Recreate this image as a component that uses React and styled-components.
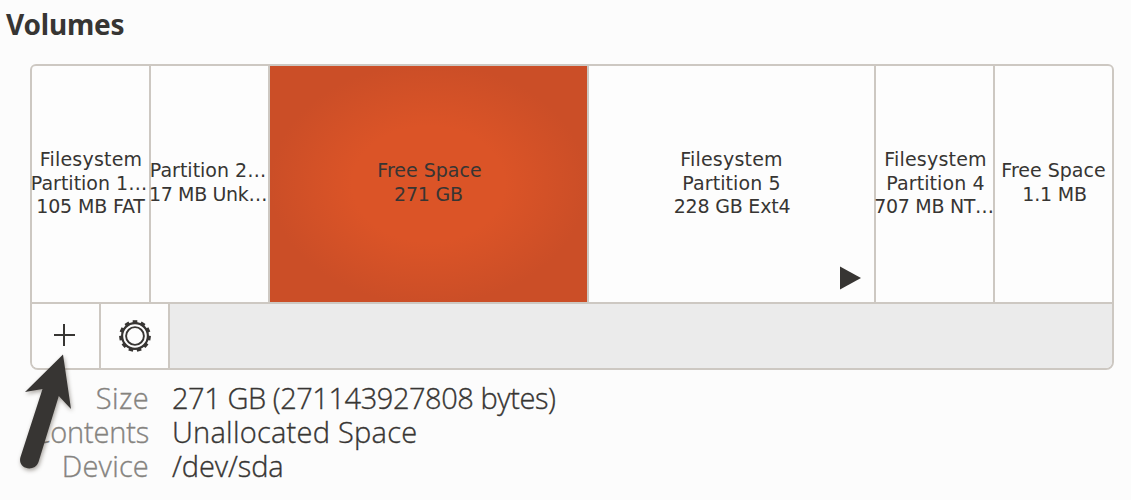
import React from 'react';
import styled, { createGlobalStyle } from 'styled-components';

const line = '#cdc8c2';
const ink = '#373533';

const GlobalStyle = createGlobalStyle`
  body { margin: 0; background: #fcfcfc; color: ${ink}; overflow: hidden; }
`;

const Page = styled.main`
  position: relative;
  box-sizing: border-box;
  width: 1131px;
  height: 500px;
  padding: 6px 17px 0 30px;
  font-family: 'Open Sans', 'Noto Sans', sans-serif;
`;

const Title = styled.h1`
  margin: 0 0 22px -24px;
  height: 36px;
  font: 700 28px/36px 'Noto Sans', 'Open Sans', sans-serif;
  letter-spacing: -0.2px;
`;

const Frame = styled.section`
  box-sizing: border-box;
  height: 306px;
  border: 2px solid ${line};
  border-radius: 6px 6px 8px 8px;
  display: flex;
  flex-direction: column;
  background: #fdfdfd;
`;

const VolumeMap = styled.div`
  display: grid;
  grid-template-columns: 117px 117px 317px 285px 117px 117px;
  gap: 2px;
  height: 236px;
  background: ${line};
  border-bottom: 2px solid ${line};
  border-radius: 4px 4px 0 0;
`;

const Volume = styled.div`
  position: relative;
  box-sizing: border-box;
  padding-bottom: ${p => (p.$rows === 3 ? 1.5 : 3)}px;
  display: flex;
  flex-direction: column;
  align-items: center;
  justify-content: center;
  border-radius: ${p => p.$radius || 0};
  background: ${p => p.$selected
    ? 'radial-gradient(ellipse 50% 51% at 50% 50%, #db5427 0%, #db5427 48%, #cb4e27 100%)'
    : '#fdfdfd'};
`;

const Label = styled.span`
  font: 19px/23.5px 'DejaVu Sans', sans-serif;
  white-space: nowrap;
  letter-spacing: ${p => p.$spacing || 0}px;
  margin-left: ${p => p.$shift || 0}px;
`;

const Playing = styled.svg`
  position: absolute;
  right: 11px;
  bottom: 11px;
`;

const Toolbar = styled.div`
  flex: 1;
  display: flex;
  background: #ebebeb;
  border-radius: 0 0 6px 6px;
`;

const ToolButton = styled.button`
  box-sizing: border-box;
  width: 69px;
  padding: ${p => (p.$first ? '0 2px 0 0' : '0')};
  border: 0;
  border-right: 2px solid ${line};
  border-radius: ${p => (p.$first ? '0 0 0 6px' : 0)};
  background: #fdfdfd;
  display: flex;
  align-items: center;
  justify-content: center;
`;

const Details = styled.dl`
  margin: 11px 0 0;
  display: grid;
  grid-template-columns: 119px 1fr;
  column-gap: 23px;
  grid-auto-rows: 34px;
  font-size: 29px;
  line-height: 34px;
  font-weight: 300;
  -webkit-text-stroke-width: 0.35px;
`;

const Term = styled.dt`
  color: #85837f;
  display: flex;
  justify-content: flex-end;
  white-space: nowrap;
  letter-spacing: ${p => p.$spacing || 0}px;
`;

const Value = styled.dd`
  margin: 0;
  white-space: nowrap;
  letter-spacing: ${p => p.$spacing || 0}px;
`;

const Pointer = styled.svg`
  position: absolute;
  left: 10px;
  top: 344px;
  filter: drop-shadow(1px 2px 2px rgba(60, 50, 40, 0.45));
`;

const volumes = [
  { lines: [['Filesystem', 0.2, 1], ['Partition 1…', 0, -3], ['105 MB FAT', -0.15, 0]], radius: '4px 0 0 0' },
  { lines: [['Partition 2…', 0, -3], ['17 MB Unk…', -0.35, -3]] },
  { lines: [['Free Space', 0, 2], ['271 GB', -0.2, 0]], selected: true },
  { lines: [['Filesystem', 0.2, 0], ['Partition 5', 0.1, 0], ['228 GB Ext4', -0.2, 1]], playing: true },
  { lines: [['Filesystem', 0.2, 2], ['Partition 4', 0.1, 2], ['707 MB NT…', -0.3, -1]] },
  { lines: [['Free Space', 0, 0], ['1.1 MB', -0.2, 2]], radius: '0 4px 0 0' },
];

const details = [
  ['Size', 0.4, '271 GB (271143927808 bytes)', -0.45],
  ['Contents', -0.2, 'Unallocated Space', 0.25],
  ['Device', 0.2, '/dev/sda', -0.1],
];

const teeth = Array.from({ length: 11 }, (_, i) => (i * 360) / 11);

export default function App() {
  return (
    <>
      <GlobalStyle />
      <Page>
        <Title>Volumes</Title>
        <Frame>
          <VolumeMap>
            {volumes.map((v, i) => (
              <Volume key={i} $rows={v.lines.length} $selected={v.selected} $radius={v.radius}>
                {v.lines.map(([text, spacing, shift]) => (
                  <Label key={text} $spacing={spacing} $shift={shift}>{text}</Label>
                ))}
                {v.playing && (
                  <Playing width="24" height="26" viewBox="0 0 24 26">
                    <path d="M1 1.5 22 13 1 24.500Z" fill={ink} />
                  </Playing>
                )}
              </Volume>
            ))}
          </VolumeMap>
          <Toolbar>
            <ToolButton $first aria-label="Create partition">
              <svg width="24" height="24" viewBox="0 0 24 24">
                <path d="M1 11H22M11 0V22" stroke={ink} strokeWidth="2" />
              </svg>
            </ToolButton>
            <ToolButton aria-label="Additional options">
              <svg width="34" height="34" viewBox="-17 -17 34 34" fill="none" stroke={ink}>
                <circle r="12.900" strokeWidth="2.200" />
                <circle r="8.900" strokeWidth="1.900" />
                {teeth.map(a => (
                  <path key={a} d="M-2.300-14.200H2.300" strokeWidth="3.200" transform={`rotate(${a})`} />
                ))}
              </svg>
            </ToolButton>
          </Toolbar>
        </Frame>
        <Details>
          {details.map(([term, ts, value, vs]) => (
            <React.Fragment key={term}>
              <Term $spacing={ts}>{term}</Term>
              <Value $spacing={vs}>{value}</Value>
            </React.Fragment>
          ))}
        </Details>
        <Pointer width="72" height="136" viewBox="10 344 72 136">
          <path
            d="M63 354.500 71 409 58.800 396 38.500 462C34.500 473 17 469 20.500 457L42.500 389 25 392Z"
            fill={ink}
          />
        </Pointer>
      </Page>
    </>
  );
}
